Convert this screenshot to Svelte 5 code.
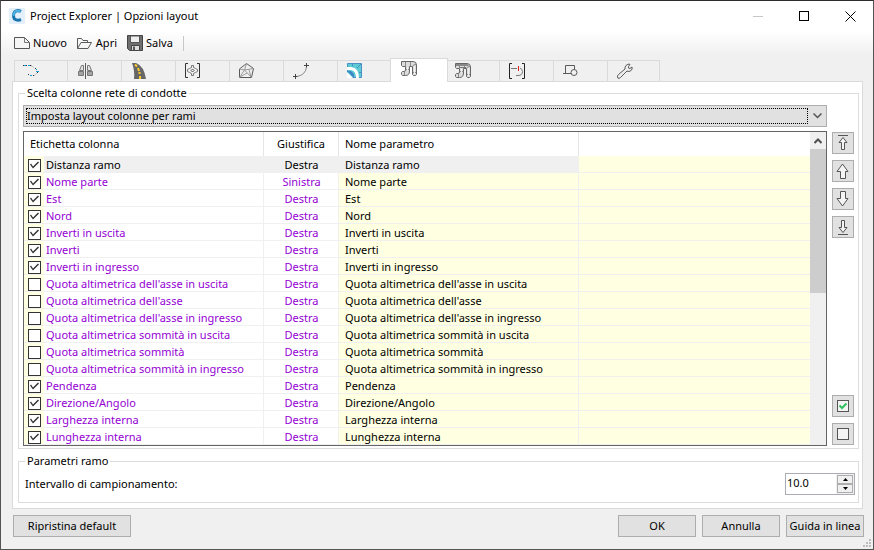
<script lang="ts">
	interface Row {
		label: string;
		align: string;
		param: string;
		checked: boolean;
	}

	function row(label: string, checked = true, align = 'Destra'): Row {
		return { label, align, param: label, checked };
	}

	let rows = $state<Row[]>([
		row('Distanza ramo'),
		row('Nome parte', true, 'Sinistra'),
		row('Est'),
		row('Nord'),
		row('Inverti in uscita'),
		row('Inverti'),
		row('Inverti in ingresso'),
		row("Quota altimetrica dell'asse in uscita", false),
		row("Quota altimetrica dell'asse", false),
		row("Quota altimetrica dell'asse in ingresso", false),
		row('Quota altimetrica sommità in uscita', false),
		row('Quota altimetrica sommità', false),
		row('Quota altimetrica sommità in ingresso', false),
		row('Pendenza'),
		row('Direzione/Angolo'),
		row('Larghezza interna'),
		row('Lunghezza interna')
	]);

	const tabs = [
		'Punti', 'Sezioni', 'Strade', 'Gruppi', 'Superfici', 'Tracciati',
		'Opere', 'Condotte', 'Reti in pressione', 'Intervalli', 'Forme', 'Strumenti'
	];

	let activeTab = $state(7);
	let selected = $state(0);
	let interval = $state('10.0');

	function step(delta: number) {
		interval = (parseFloat(interval) + delta).toFixed(1);
	}

	function setAll(value: boolean) {
		rows.forEach((r) => (r.checked = value));
	}

	function move(to: number) {
		const target = Math.max(0, Math.min(rows.length - 1, to));
		const [item] = rows.splice(selected, 1);
		rows.splice(target, 0, item);
		selected = target;
	}
</script>

{#snippet pipe(dark: boolean)}
	<path d="M.5 .5H12Q15.500 .5 15.500 4V13.500L14.500 14.500H12.500L11.500 13.500V5.500H8.500V10Q8.500 14.500 4.500 14.500H1.500L.5 13.500V11.500L1.500 10.500H3Q4.500 10.500 4.500 9V5.500H1.500L.5 4.500Z" fill="#dcdcdc" stroke="#666" />
	<path d="M4.500 1V5M9.500 1V5M12 5Q12 3.500 15 3.500M12 11.500H15M4.500 8.500H8.500M3.500 11V14" fill="none" stroke="#8a8a8a" />
	<path d="M6.500 6V9.500M13.500 5V13" fill="none" stroke="#f2f2f2" />
	{#if dark}
		<path d="M1 1H12.500L14 3H1Z" fill="#888" stroke="none" />
		<path d="M5 4.500H11" stroke="#777" />
	{/if}
{/snippet}

{#snippet tabIcon(i: number)}
	<svg width="16" height="16" viewBox="0 0 16 16" fill="none" stroke="#5a5a5a">
		{#if i === 0}
			<path d="M0 2.500H1M3 2.500H4M7 2.500H8M12.500 5V6M14.500 9V10M10 12.500H11M5 11.500H6" stroke="#333" />
			<path d="M1 2.500H3M5 2.500H7M13 6.500H14M13 8.500H16M7 12.500H9" stroke="#1b9ed8" />
			<path d="M8 2.500L11 4.500M13.500 10.500L11.500 12.500" stroke="#888" stroke-dasharray="1 1" />
		{:else if i === 1}
			<path d="M8.500 0V16" />
			<path d="M6.500 2.500H4.500L2.500 7.500H6.500ZM10.500 2.500H12.500L14.500 7.500H10.500Z" fill="#e4e4e4" stroke="#777" />
			<path d="M1.500 8.500H6.500V12.500H1.500ZM10.500 8.500H15.500V12.500H10.500Z" fill="#a4a4a4" stroke="#777" />
		{:else if i === 2}
			<path d="M1 0H5Q13 3 15 16H3Q4 8 1 0Z" fill="#666" stroke="none" />
			<path d="M4 1.500L6 3.500M7 5L8 8M8.500 9V11M9 13V16" stroke="#ffc928" stroke-width="2" />
		{:else if i === 3}
			<path d="M3 .5H.5V14.500H3M12 .5H14.500V14.500H12" stroke="#333" />
			<path d="M6.500 2.500H8.500V4.500L10.500 5.500L12.500 6.500V8.500L10.500 9.500L8.500 10.500V12.500H6.500V10.500L4.500 9.500L2.500 8.500V6.500L4.500 5.500L6.500 4.500Z" stroke="#777" />
			<path d="M6 7.500L7.500 6L9 7.500L7.500 9Z" stroke="#555" />
		{:else if i === 4}
			<path d="M7.500 .5L14.500 5.500L12.500 14.500H.5V6Z" />
			<path d="M7.500 .5L5.500 7M.5 6L5.500 7L14.500 5.500M5.500 7L.5 14.500M5.500 7L12.500 14.500M8 10L1 14M10 6.500L12 14" stroke="#999" />
		{:else if i === 5}
			<path d="M13.500 0V5M11 2.500H16M2.500 11V16M0 13.500H5" stroke="#444" />
			<path d="M13.500 4Q12.500 12 4 13.500" stroke="#888" />
		{:else if i === 6}
			<path d="M.5 .5H14.500V14.500H.5Z" fill="#5ccbd3" stroke="#4a90c4" />
			<path d="M0 5.500H4Q10.500 6 10.500 15" stroke="#fff" stroke-width="3" />
			<path d="M0 9L6 15H0Z" fill="#fff" stroke="none" />
			<path d="M0 8L7 15V11L4 8Z" fill="#3f86c8" stroke="none" />
			<path d="M5.500 1V3.500M10 5L14 1M12 9.500H14" stroke="#4a90c4" />
		{:else if i === 7}
			{@render pipe(false)}
		{:else if i === 8}
			{@render pipe(true)}
		{:else if i === 9}
			<path d="M3 .5H.5V15.500H3M13 .5H15.500V15.500H13" stroke="#222" />
			<path d="M2 5.500H8M11 5Q13.500 6 13.500 8.500Q13.500 12.500 9 12.500H7" stroke="#777" />
			<path d="M9.500 3V8" stroke="#e02020" />
		{:else if i === 10}
			<path d="M2.500 10V2.500H11.500V6M0 10.500H8" />
			<circle cx="11" cy="9.500" r="3" />
		{:else}
			<path d="M.8 15Q-.5 13 1.500 11.500L8 6Q7.500 2 12 1L13 1.500L11.500 3.500V5L13 5.500L15 4Q16 6 13.500 8Q12 9 10 8L3.500 14.500Q2 16 .8 15Z" fill="#eee" />
		{/if}
	</svg>
{/snippet}

<div class="window">
	<header class="titlebar">
		<svg class="logo" width="16" height="16" viewBox="0 0 16 16">
			<rect width="16" height="16" rx="1" fill="#e3f0fa" />
			<path d="M12 3.500Q8.500 1.500 5.500 4Q3.500 7.500 5.500 11Q8.500 13 12 11.500" fill="none" stroke="#1b74ad" stroke-width="3" />
			<path d="M11.500 3.500Q8.500 2 5.500 4Q4.500 6 4.500 8" fill="none" stroke="#4eb2e2" stroke-width="2" />
		</svg>
		<h1>Project Explorer | Opzioni layout</h1>
		<div class="controls">
			<button aria-label="Riduci a icona" disabled>
				<svg width="11" height="11"><path d="M0 5.500H10" stroke="#c6c6c6" /></svg>
			</button>
			<button aria-label="Ingrandisci">
				<svg width="11" height="11"><rect x=".5" y=".5" width="9" height="9" fill="none" stroke="#000" /></svg>
			</button>
			<button aria-label="Chiudi">
				<svg width="11" height="11"><path d="M.5 .5L10.500 10.500M10.500 .5L.5 10.500" stroke="#000" /></svg>
			</button>
		</div>
	</header>

	<div class="toolbar">
		<button>
			<svg width="17" height="16" viewBox="0 0 17 16"><path d="M.5 2.500H10.500L15.500 7.500V13.500H.5Z" fill="#f6f6f6" stroke="#555" /><path d="M10.500 2.500V7.500H15.500" fill="none" stroke="#777" /></svg>
			Nuovo
		</button>
		<button>
			<svg width="17" height="16" viewBox="0 0 17 16"><path d="M.5 13.500V3.500H4.500L6 5.500H10.500V7.500M.5 13.500L4 7.500H14.500L11 13.500Z" fill="none" stroke="#5a5a5a" /></svg>
			Apri
		</button>
		<button>
			<svg width="17" height="16" viewBox="0 0 17 16"><path d="M.5 .5H15.500V15.500H2.500L.5 13.500Z" fill="#6e6e6e" stroke="#444" /><path d="M3.500 1H12.500V7.500H3.500Z" fill="#eee" stroke="#555" /><path d="M4.500 10.500H12.500V15.500H4.500Z" fill="#ddd" stroke="#444" /><path d="M6 11.500H8V15H6Z" fill="#555" /></svg>
			Salva
		</button>
		<span class="divider"></span>
	</div>

	<main>
		<div class="tabs" role="tablist">
			{#each tabs as tab, i}
				<button role="tab" class:active={activeTab === i} aria-selected={activeTab === i} aria-label={tab} onclick={() => (activeTab = i)}>
					{@render tabIcon(i)}
				</button>
			{/each}
		</div>

		<div class="page">
			<fieldset class="columns">
				<legend>Scelta colonne rete di condotte</legend>
				<div class="columns-body">
					<div class="combo">
						<select aria-label="Layout colonne">
							<option>Imposta layout colonne per rami</option>
						</select>
						<span class="focus"></span>
						<svg width="9" height="6" viewBox="0 0 9 6"><path d="M.5 .5L4.500 4.500L8.500 .5" fill="none" stroke="#555" stroke-width="1.500" /></svg>
					</div>

					<div class="grid-row">
						<div class="list">
							<table>
								<colgroup>
									<col class="c-check" />
									<col class="c-label" />
									<col class="c-align" />
									<col class="c-param" />
									<col />
								</colgroup>
								<thead>
									<tr>
										<th colspan="2">Etichetta colonna</th>
										<th class="center">Giustifica</th>
										<th>Nome parametro</th>
										<th class="rest" aria-label="Altro"></th>
									</tr>
								</thead>
								<tbody>
									{#each rows as item, i}
										<tr class:selected={selected === i} onclick={() => (selected = i)}>
											<td class="check"><input type="checkbox" id="row-{i}" bind:checked={item.checked} /></td>
											<td class="label"><label for="row-{i}">{item.label}</label></td>
											<td class="align">{item.align}</td>
											<td class="param">{item.param}</td>
											<td class="rest"></td>
										</tr>
									{/each}
								</tbody>
							</table>
							<div class="scrollbar">
								<button aria-label="Scorri in alto">
									<svg width="8" height="6" viewBox="0 0 8 6"><path d="M.5 5L4 1.500L7.500 5" fill="none" stroke="#505050" stroke-width="2" /></svg>
								</button>
								<div class="thumb"></div>
							</div>
						</div>

						<div class="side">
							<button aria-label="Sposta all'inizio" onclick={() => move(0)}>
								<svg width="16" height="16" viewBox="0 0 16 16"><path d="M3 .5H13" /><path d="M8 2.500L12 7.500H9.500V14.500H6.500V7.500H4Z" /></svg>
							</button>
							<button aria-label="Sposta su" onclick={() => move(selected - 1)}>
								<svg width="16" height="16" viewBox="0 0 16 16"><path d="M7.500 1L13 8.500H10.500V15.500H5.500V8.500H2Z" /></svg>
							</button>
							<button aria-label="Sposta giù" onclick={() => move(selected + 1)}>
								<svg width="16" height="16" viewBox="0 0 16 16"><path d="M7.500 15L13 7.500H10.500V.5H5.500V7.500H2Z" /></svg>
							</button>
							<button aria-label="Sposta alla fine" onclick={() => move(rows.length - 1)}>
								<svg width="16" height="16" viewBox="0 0 16 16"><path d="M3 15.500H13" /><path d="M8 13.500L12 8.500H9.500V1.500H6.500V8.500H4Z" /></svg>
							</button>
							<button class="bottom" aria-label="Seleziona tutto" onclick={() => setAll(true)}>
								<svg width="16" height="16" viewBox="0 0 16 16"><rect x="2.500" y="2.500" width="11" height="11" /><path d="M4.500 7.500L7 10L11.500 5.500" fill="none" stroke="#2fc060" stroke-width="2" /></svg>
							</button>
							<button aria-label="Deseleziona tutto" onclick={() => setAll(false)}>
								<svg width="16" height="16" viewBox="0 0 16 16"><rect x="2.500" y="2.500" width="11" height="11" /></svg>
							</button>
						</div>
					</div>
				</div>
			</fieldset>

			<fieldset class="params">
				<legend>Parametri ramo</legend>
				<div class="params-body">
					<label for="interval">Intervallo di campionamento:</label>
					<div class="spinner">
						<input id="interval" type="text" bind:value={interval} />
						<div class="steps">
							<button aria-label="Aumenta" onclick={() => step(1)}>
								<svg width="5" height="3"><path d="M0 3L2.500 0L5 3Z" /></svg>
							</button>
							<button aria-label="Diminuisci" onclick={() => step(-1)}>
								<svg width="5" height="3"><path d="M0 0L2.500 3L5 0Z" /></svg>
							</button>
						</div>
					</div>
				</div>
			</fieldset>
		</div>
	</main>

	<footer>
		<button class="reset">Ripristina default</button>
		<button>OK</button>
		<button>Annulla</button>
		<button>Guida in linea</button>
	</footer>

	<svg class="grip" width="8" height="8" viewBox="0 0 8 8" fill="#bdbdbd">
		<path d="M6 0H8V2H6ZM3 3H5V5H3ZM6 3H8V5H6ZM0 6H2V8H0ZM3 6H5V8H3ZM6 6H8V8H6Z" />
	</svg>
</div>

<style>
	:global(body) {
		margin: 0;
	}

	.window {
		position: relative;
		display: flex;
		flex-direction: column;
		box-sizing: border-box;
		min-height: 100vh;
		border: 1px solid #555253;
		border-top-color: #302c2e;
		background: #f0f0f0;
		font-family: 'Noto Sans', 'Open Sans', sans-serif;
		font-size: 11px;
		line-height: 16px;
		color: #000;
	}

	button,
	input,
	select {
		font: inherit;
		color: inherit;
		margin: 0;
		padding: 0;
		box-sizing: border-box;
		border-radius: 0;
	}

	svg {
		display: block;
		flex: none;
	}

	.titlebar {
		display: flex;
		align-items: center;
		height: 30px;
		padding-left: 8px;
		background: #fff;
	}

	.titlebar h1 {
		margin: 0 0 0 5px;
		font-size: 11px;
		font-weight: 400;
	}

	.controls {
		display: flex;
		margin-left: auto;
	}

	.controls button {
		display: grid;
		place-items: center;
		width: 46px;
		height: 28px;
		border: 0;
		background: none;
	}

	.toolbar {
		display: flex;
		align-items: center;
		gap: 10px;
		height: 24px;
		padding-left: 13px;
		background: linear-gradient(#fff, #f0f0f0);
	}

	.toolbar button {
		display: flex;
		align-items: center;
		gap: 2px;
		border: 0;
		background: none;
	}

	.divider {
		width: 1px;
		height: 15px;
		background: #c8c8c8;
	}

	main {
		padding: 2px 10px 0 11px;
	}

	.tabs {
		display: flex;
		align-items: flex-end;
		height: 24px;
		padding-left: 2px;
	}

	.tabs button {
		display: flex;
		width: 54px;
		height: 21px;
		padding: 2px 9px;
		border: 1px solid #dadada;
		border-width: 1px 0 0 1px;
		background: #f0f0f0;
	}

	.tabs button:first-child {
		width: 53px;
		padding-left: 8px;
	}

	.tabs button:last-child {
		width: 53px;
		border-right-width: 1px;
	}

	.tabs .active {
		position: relative;
		width: 58px;
		height: 24px;
		margin: 0 -3px -1px -1px;
		padding: 2px 10px;
		border-right-width: 1px;
		background: #fff;
	}

	.page {
		padding: 3px 3px 5px 5px;
		border: 1px solid #dadada;
		background: #fff;
	}

	fieldset {
		min-width: 0;
		margin: 0;
		padding: 0;
		border: 1px solid #dcdcdc;
	}

	legend {
		margin-left: 6px;
		padding: 0 2px;
	}

	.columns-body {
		padding: 4px 4px 2px;
	}

	.combo {
		position: relative;
		margin-right: 27px;
	}

	select {
		display: block;
		width: 100%;
		height: 22px;
		padding: 0 22px 0 3px;
		appearance: none;
		border: 1px solid #adadad;
		background: #e1e1e1;
		outline: none;
	}

	.focus {
		position: absolute;
		inset: 3px 19px 3px 3px;
		border: 1px dotted #000;
		pointer-events: none;
	}

	.combo svg {
		position: absolute;
		top: 8px;
		right: 5px;
		pointer-events: none;
	}

	.grid-row {
		display: flex;
		gap: 5px;
		margin-top: 4px;
	}

	.list {
		display: flex;
		flex: 1;
		border: 1px solid #646464;
	}

	table {
		flex: 1;
		table-layout: fixed;
		width: 100%;
		border-collapse: separate;
		border-spacing: 0;
	}

	.c-check {
		width: 20px;
	}

	.c-label {
		width: 220px;
	}

	.c-align {
		width: 75px;
	}

	.c-param {
		width: 240px;
	}

	th {
		height: 24px;
		padding: 0 6px;
		border-right: 1px solid #e5e5e5;
		font-weight: 400;
		text-align: left;
	}

	th.center {
		padding: 0;
		text-align: center;
	}

	th.rest {
		border: 0;
	}

	td {
		height: 14px;
		padding: 2px 0 0;
		border-bottom: 1px solid #f0f0f0;
		line-height: 14px;
		white-space: nowrap;
	}

	.check {
		padding-left: 4px;
		background: #ffffe1;
	}

	td.label,
	td.align {
		border-right: 1px solid #f0f0f0;
		color: #9400d3;
	}

	td.label {
		padding-left: 2px;
	}

	td.align {
		padding-left: 1px;
		text-align: center;
	}

	td.param {
		padding-left: 6px;
		border-right: 1px solid #f0f0f0;
		background: #ffffe1;
	}

	td.rest {
		background: #ffffe1;
	}

	.selected td.label,
	.selected td.align,
	.selected td.param {
		background: #f0f0f0;
		color: #000;
	}

	input[type='checkbox'] {
		display: block;
		width: 13px;
		height: 13px;
		appearance: none;
		border: 1px solid #333;
		background: #fff;
	}

	input[type='checkbox']:checked::before {
		content: '';
		display: block;
		width: 11px;
		height: 11px;
		background: #333;
		clip-path: polygon(1px 5px, 2px 4px, 4px 7px, 9px 2px, 10px 3px, 4px 9px);
	}

	.scrollbar {
		display: flex;
		flex-direction: column;
		width: 16px;
		background: #f0f0f0;
	}

	.scrollbar button {
		display: grid;
		place-items: center;
		height: 17px;
		border: 0;
		background: none;
	}

	.thumb {
		height: 46%;
		background: #cdcdcd;
	}

	.side {
		display: flex;
		flex-direction: column;
		gap: 6px;
		padding: 1px 0;
	}

	.side button {
		display: grid;
		place-items: center;
		width: 22px;
		height: 22px;
		border: 1px solid #adadad;
		background: #e1e1e1;
	}

	.side svg {
		fill: #f4f4f4;
		stroke: #555;
	}

	.side .bottom {
		margin-top: auto;
	}

	.params {
		margin-top: 4px;
	}

	.params-body {
		display: flex;
		align-items: center;
		justify-content: space-between;
		padding: 4px 3px 7px 6px;
	}

	.spinner {
		display: flex;
		width: 70px;
		height: 22px;
		box-sizing: border-box;
		border: 1px solid #ababb3;
		background: #fff;
	}

	.spinner input {
		flex: 1;
		min-width: 0;
		height: 17px;
		padding-left: 1px;
		border: 0;
		outline: none;
		background: none;
	}

	.steps {
		display: flex;
		flex-direction: column;
		width: 16px;
		padding: 1px;
		background: #f0f0f0;
	}

	.steps button {
		display: grid;
		flex: 1;
		place-items: center;
		border: 1px solid #adadad;
		background: #f0f0f0;
	}

	footer {
		display: flex;
		gap: 6px;
		padding: 6px 9px 12px 12px;
	}

	footer button {
		width: 78px;
		height: 22px;
		border: 1px solid #adadad;
		background: #e1e1e1;
		white-space: nowrap;
	}

	footer .reset {
		width: 118px;
		margin-right: auto;
	}

	.grip {
		position: absolute;
		right: 2px;
		bottom: 2px;
	}
</style>
